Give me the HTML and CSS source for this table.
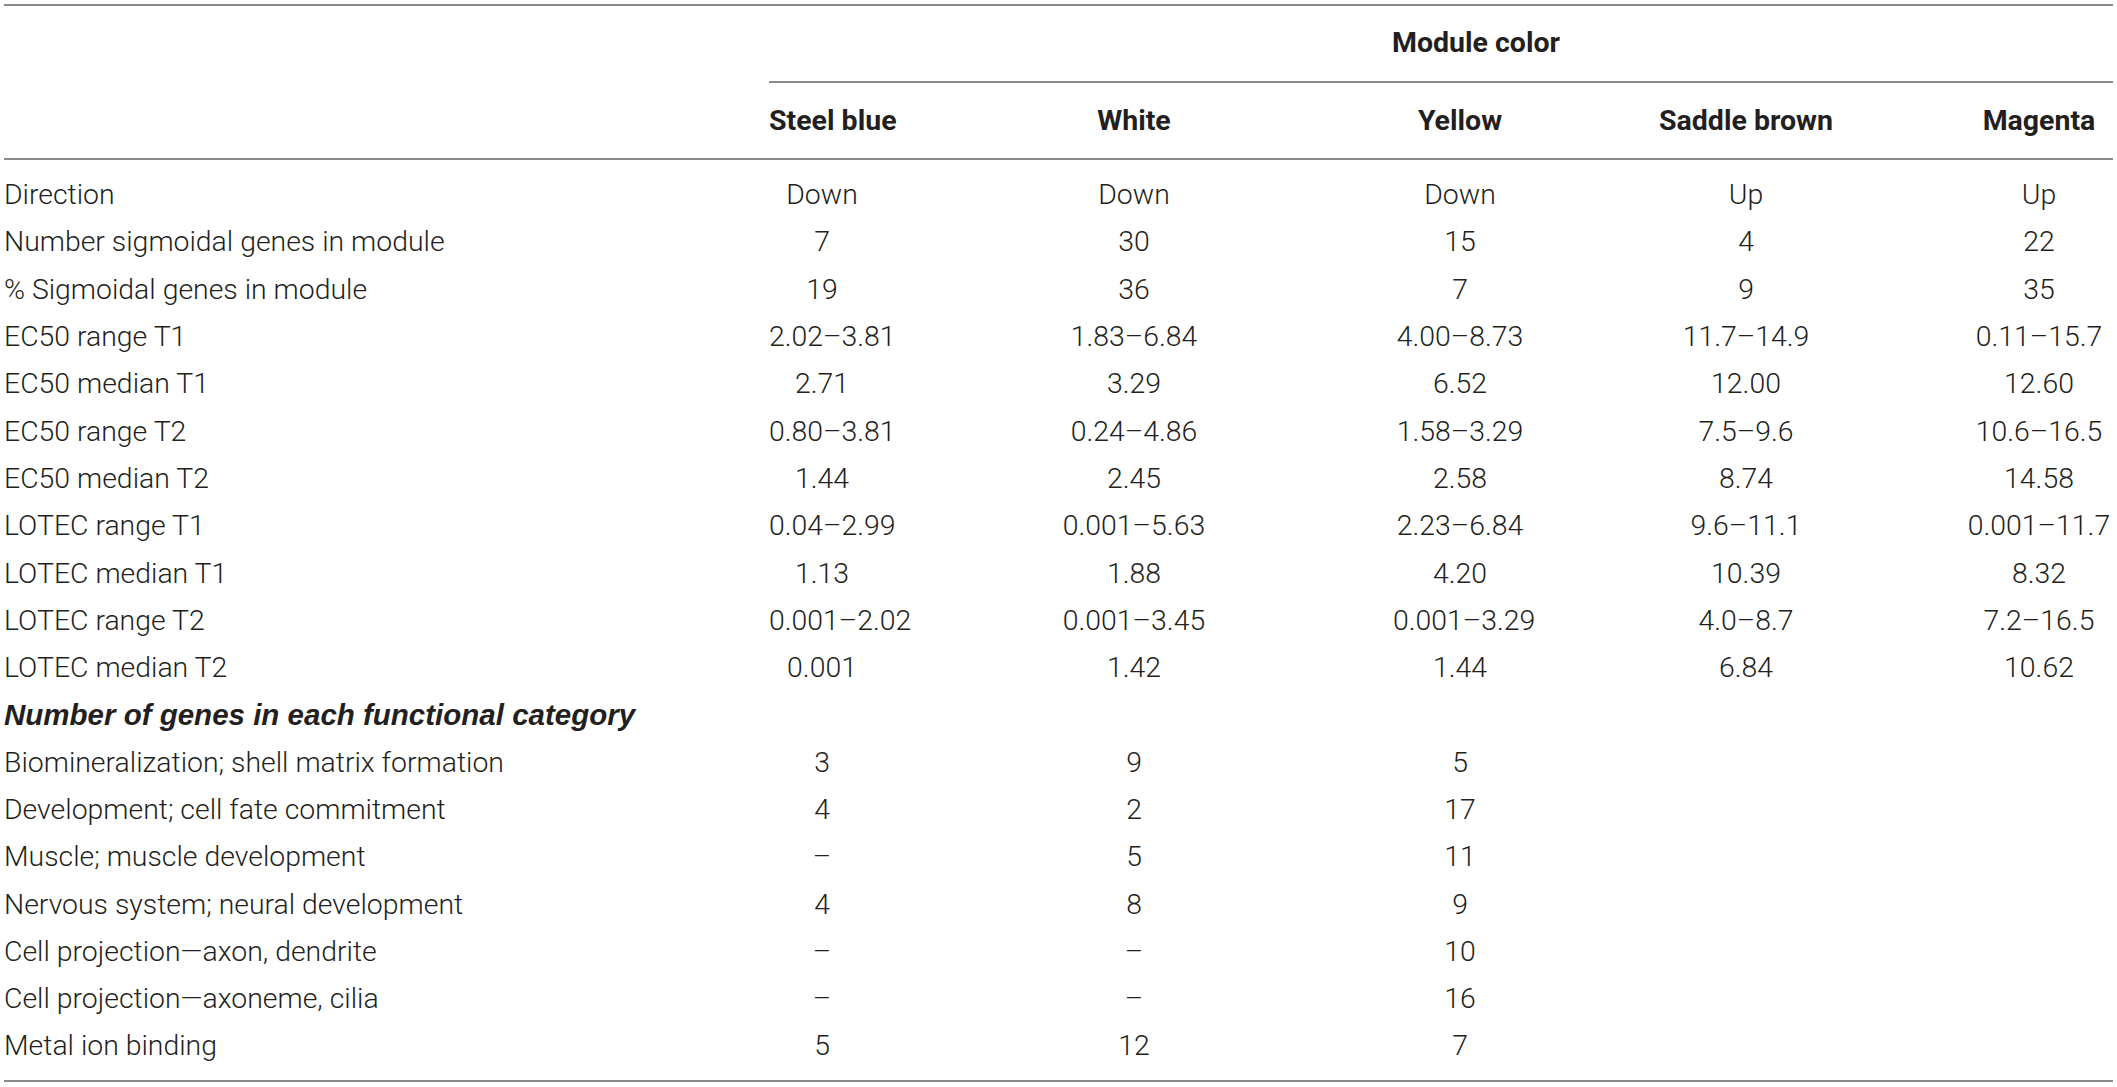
FILE: index.html
```html
<!DOCTYPE html>
<html>
<head>
<meta charset="utf-8">
<link rel="stylesheet" href="styles.css">
</head>
<body>
<div class="table">
  <div class="row head1">
    <div class="cell"></div>
    <div class="cell span">Module color</div>
  </div>
  <div class="row head2">
    <div class="cell"></div>
    <div class="cell c">Steel blue</div>
    <div class="cell c">White</div>
    <div class="cell c">Yellow</div>
    <div class="cell c">Saddle brown</div>
    <div class="cell c">Magenta</div>
  </div>
  <div class="body">
    <div class="row"><div class="cell">Direction</div><div class="cell c">Down</div><div class="cell c">Down</div><div class="cell c">Down</div><div class="cell c">Up</div><div class="cell c">Up</div></div>
    <div class="row"><div class="cell">Number sigmoidal genes in module</div><div class="cell c">7</div><div class="cell c">30</div><div class="cell c">15</div><div class="cell c">4</div><div class="cell c">22</div></div>
    <div class="row"><div class="cell">% Sigmoidal genes in module</div><div class="cell c">19</div><div class="cell c">36</div><div class="cell c">7</div><div class="cell c">9</div><div class="cell c">35</div></div>
    <div class="row"><div class="cell">EC50 range T1</div><div class="cell c">2.02–3.81</div><div class="cell c">1.83–6.84</div><div class="cell c">4.00–8.73</div><div class="cell c">11.7–14.9</div><div class="cell c">0.11–15.7</div></div>
    <div class="row"><div class="cell">EC50 median T1</div><div class="cell c">2.71</div><div class="cell c">3.29</div><div class="cell c">6.52</div><div class="cell c">12.00</div><div class="cell c">12.60</div></div>
    <div class="row"><div class="cell">EC50 range T2</div><div class="cell c">0.80–3.81</div><div class="cell c">0.24–4.86</div><div class="cell c">1.58–3.29</div><div class="cell c">7.5–9.6</div><div class="cell c">10.6–16.5</div></div>
    <div class="row"><div class="cell">EC50 median T2</div><div class="cell c">1.44</div><div class="cell c">2.45</div><div class="cell c">2.58</div><div class="cell c">8.74</div><div class="cell c">14.58</div></div>
    <div class="row"><div class="cell">LOTEC range T1</div><div class="cell c">0.04–2.99</div><div class="cell c">0.001–5.63</div><div class="cell c">2.23–6.84</div><div class="cell c">9.6–11.1</div><div class="cell c">0.001–11.7</div></div>
    <div class="row"><div class="cell">LOTEC median T1</div><div class="cell c">1.13</div><div class="cell c">1.88</div><div class="cell c">4.20</div><div class="cell c">10.39</div><div class="cell c">8.32</div></div>
    <div class="row"><div class="cell">LOTEC range T2</div><div class="cell c">0.001–2.02</div><div class="cell c">0.001–3.45</div><div class="cell c">0.001–3.29</div><div class="cell c">4.0–8.7</div><div class="cell c">7.2–16.5</div></div>
    <div class="row"><div class="cell">LOTEC median T2</div><div class="cell c">0.001</div><div class="cell c">1.42</div><div class="cell c">1.44</div><div class="cell c">6.84</div><div class="cell c">10.62</div></div>
    <div class="row"><div class="cell section">Number of genes in each functional category</div></div>
    <div class="row"><div class="cell">Biomineralization; shell matrix formation</div><div class="cell c">3</div><div class="cell c">9</div><div class="cell c">5</div><div class="cell c"></div><div class="cell c"></div></div>
    <div class="row"><div class="cell">Development; cell fate commitment</div><div class="cell c">4</div><div class="cell c">2</div><div class="cell c">17</div><div class="cell c"></div><div class="cell c"></div></div>
    <div class="row"><div class="cell">Muscle; muscle development</div><div class="cell c">–</div><div class="cell c">5</div><div class="cell c">11</div><div class="cell c"></div><div class="cell c"></div></div>
    <div class="row"><div class="cell">Nervous system; neural development</div><div class="cell c">4</div><div class="cell c">8</div><div class="cell c">9</div><div class="cell c"></div><div class="cell c"></div></div>
    <div class="row"><div class="cell">Cell projection—axon, dendrite</div><div class="cell c">–</div><div class="cell c">–</div><div class="cell c">10</div><div class="cell c"></div><div class="cell c"></div></div>
    <div class="row"><div class="cell">Cell projection—axoneme, cilia</div><div class="cell c">–</div><div class="cell c">–</div><div class="cell c">16</div><div class="cell c"></div><div class="cell c"></div></div>
    <div class="row"><div class="cell">Metal ion binding</div><div class="cell c">5</div><div class="cell c">12</div><div class="cell c">7</div><div class="cell c"></div><div class="cell c"></div></div>
  </div>
</div>
</body>
</html>
```
FILE: styles.css
```css
html, body {
  margin: 0;
  padding: 0;
  background: #ffffff;
}
body {
  font-family: Roboto, "Liberation Sans", Arial, sans-serif;
  font-weight: 300;
  font-size: 28.4px;
  color: #231f20;
}
.table {
  margin: 4px 4px 0 4px;
  border-top: 2px solid #8a8a8a;
  border-bottom: 2px solid #8a8a8a;
}
.row {
  display: grid;
  grid-template-columns: 765px 106px 518px 134px 438px 148px;
  align-items: center;
  height: 47.3px;
}
.cell {
  white-space: nowrap;
}
.c {
  text-align: center;
}
.head1 {
  height: 77px;
  align-items: stretch;
}
.head1 .span {
  grid-column: 2 / 7;
  display: flex;
  align-items: center;
  justify-content: center;
  font-weight: 700;
  font-size: 28.5px;
  border-bottom: 2px solid #8a8a8a;
  padding: 0 0 2px 70px;
}
.head2 {
  height: 75px;
  border-bottom: 2px solid #8a8a8a;
  font-weight: 700;
  font-size: 28.5px;
}
.body {
  padding: 11px 0 10px 0;
}
.section {
  grid-column: 1 / 7;
  font-family: "Liberation Sans", Arial, sans-serif;
  font-weight: 700;
  font-style: italic;
  font-size: 29.5px;
}
```
